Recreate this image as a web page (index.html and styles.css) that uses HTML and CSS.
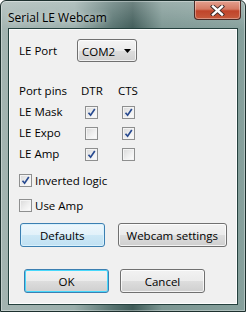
FILE: index.html
```html
<!DOCTYPE html>
<html lang="en">
<head>
  <meta charset="UTF-8">
  <title>Serial LE Webcam</title>
  <link rel="stylesheet" href="styles.css">
</head>
<body>
  <div class="window">
    <div class="titlebar">
      <span class="title">Serial LE Webcam</span>
      <span class="close">
        <svg width="17" height="11" viewBox="0 0 17 11">
          <path d="M4 1.5 L13 9.5 M13 1.5 L4 9.5" stroke="#3a2a28" stroke-width="4.2" stroke-linecap="square"/>
          <path d="M4 1.5 L13 9.5 M13 1.5 L4 9.5" stroke="#fff" stroke-width="2.4" stroke-linecap="square"/>
        </svg>
      </span>
    </div>

    <div class="client">
      <div class="port-row">
        <span class="label">LE Port</span>
        <div class="combo">
          <span>COM2</span>
          <svg width="7" height="4" viewBox="0 0 7 4"><path d="M0 0 H7 L3.5 4 Z" fill="#000"/></svg>
        </div>
      </div>

      <div class="pins">
        <span>Port pins</span><span>DTR</span><span>CTS</span>

        <span>LE Mask</span>
        <span><i class="box on"></i></span>
        <span><i class="box on"></i></span>

        <span>LE Expo</span>
        <span><i class="box"></i></span>
        <span><i class="box on"></i></span>

        <span>LE Amp</span>
        <span><i class="box on"></i></span>
        <span><i class="box"></i></span>
      </div>

      <label class="check first"><i class="box on"></i>Inverted logic</label>
      <label class="check"><i class="box"></i>Use Amp</label>

      <div class="btn-row top">
        <button class="btn focus">Defaults</button>
        <button class="btn wide">Webcam settings</button>
      </div>
      <div class="btn-row bottom">
        <button class="btn default">OK</button>
        <button class="btn">Cancel</button>
      </div>
    </div>
  </div>
</body>
</html>
```

FILE: styles.css
```css
body {
  margin: 0;
  font-family: "Open Sans", "DejaVu Sans", sans-serif;
  font-size: 11.5px;
  color: #000;
  background: #fff;
}

.window {
  width: 246px;
  height: 312px;
  box-sizing: border-box;
  border: 1px solid #1d302e;
  border-radius: 6px 6px 0 0;
  display: flex;
  flex-direction: column;
  background:
    linear-gradient(180deg, rgba(255,255,255,0.25) 0%, rgba(255,255,255,0) 30px),
    linear-gradient(90deg, #a3b4b1 0%, #9aaeab 30%, #56726f 46%, #3f5b58 54%, #7c9692 66%, #86a09c 100%);
  box-shadow: inset 0 0 0 1px rgba(255,255,255,0.35);
}

.titlebar {
  height: 27px;
  display: flex;
  align-items: flex-start;
  padding-left: 7px;
}

.title {
  margin-top: 8px;
  font-size: 12px;
  text-shadow: 0 0 6px rgba(255,255,255,0.8);
}

.close {
  margin-left: auto;
  margin-right: 4px;
  width: 47px;
  height: 19px;
  box-sizing: border-box;
  border: 1px solid #4a2a26;
  border-top: none;
  border-radius: 0 0 4px 4px;
  display: flex;
  align-items: center;
  justify-content: center;
  background: linear-gradient(180deg, #e4a08f 0%, #d57a63 45%, #c0442a 55%, #c65a3c 100%);
  box-shadow: inset 0 0 0 1px rgba(255,255,255,0.35);
}

.client {
  flex: 1;
  margin: 0 7px 6px 7px;
  border: 1px solid #24403d;
  background: #f0f0f0;
  box-shadow: inset 0 0 0 1px #fdfdfd;
  padding: 0 10px;
}

.port-row {
  display: flex;
  align-items: center;
  margin-top: 10px;
  height: 23px;
}

.label {
  width: 58px;
}

.combo {
  width: 60px;
  height: 23px;
  box-sizing: border-box;
  border: 1px solid #707070;
  border-radius: 3px;
  display: flex;
  align-items: center;
  justify-content: space-between;
  padding: 1px 5px 0 4px;
  background: linear-gradient(180deg, #f4f4f4 0%, #ebebeb 50%, #dddddd 51%, #d0d0d0 100%);
  box-shadow: inset 0 0 0 1px rgba(255,255,255,0.7);
}

.pins {
  display: grid;
  grid-template-columns: 62px 37px auto;
  grid-auto-rows: 21px;
  align-items: center;
  margin-top: 18px;
}

.pins i.box {
  margin-left: 4px;
}

.box {
  display: inline-block;
  width: 13px;
  height: 13px;
  box-sizing: border-box;
  border: 1px solid #8e8f8f;
  background: linear-gradient(135deg, #d9d9d9 0%, #f1f1f1 60%, #fdfdfd 100%);
  box-shadow: inset 0 0 0 1px #f4f4f4;
  vertical-align: middle;
  position: relative;
}

.box.on::after {
  content: "";
  position: absolute;
  left: 1px;
  top: 1px;
  width: 9px;
  height: 9px;
  background: url("data:image/svg+xml,%3Csvg xmlns='http://www.w3.org/2000/svg' width='9' height='9'%3E%3Cpath d='M1.5 4.8 L3.6 7.2 L7.8 1' fill='none' stroke='%23284a90' stroke-width='1.7'/%3E%3C/svg%3E") no-repeat;
}

.check {
  display: flex;
  align-items: center;
  height: 20px;
  margin-top: 5px;
}

.check.first {
  margin-top: 6px;
}

.check .box {
  margin-right: 3px;
}

.btn-row {
  display: flex;
}

.btn-row.top {
  margin-top: 8px;
  margin-left: 1px;
  gap: 13px;
}

.btn-row.bottom {
  margin-top: 22px;
  margin-left: 5px;
  gap: 11px;
}

.btn {
  font: inherit;
  width: 85px;
  height: 24px;
  padding: 0;
  border: 1px solid #707070;
  border-radius: 3px;
  color: #000;
  background: linear-gradient(180deg, #f2f2f2 0%, #ebebeb 50%, #dddddd 51%, #cfcfcf 100%);
  box-shadow: inset 0 0 0 1px rgba(255,255,255,0.75);
}

.btn.wide {
  width: 110px;
}

.btn.focus {
  border-color: #3c7fb1;
  background: linear-gradient(180deg, #eef7fc 0%, #e1f1fa 50%, #cde8f6 51%, #c0e0f2 100%);
  box-shadow: inset 0 0 0 1px #d8f1fd;
}

.btn.default {
  border-color: #3c7fb1;
  box-shadow: inset 0 0 0 1px #48d8fb;
}
```
